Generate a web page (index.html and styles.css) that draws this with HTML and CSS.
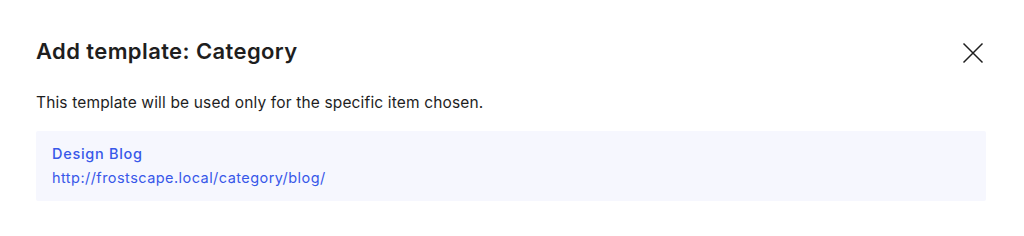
FILE: index.html
```html
<!DOCTYPE html>
<html>
<head>
<meta charset="utf-8">
<link rel="stylesheet" href="styles.css">
</head>
<body>
<div class="modal">
  <div class="header">
    <h1 class="title">Add template: Category</h1>
    <button class="close" aria-label="Close">
      <svg width="24" height="24" viewBox="0 0 24 24"><path d="M2.5 2.5L21.5 21.5M21.5 2.5L2.5 21.5" stroke="#1e1e1e" stroke-width="1.5" fill="none"/></svg>
    </button>
  </div>
  <p class="desc">This template will be used only for the specific item chosen.</p>
  <div class="item">
    <div class="item-title">Design Blog</div>
    <div class="item-url">http://frostscape.local/category/blog/</div>
  </div>
</div>
</body>
</html>
```
FILE: styles.css
```css
html, body {
  margin: 0;
  padding: 0;
  background: #fff;
}
body {
  font-family: Inter, "Noto Sans", sans-serif;
  color: #1e1e1e;
}
.modal {
  width: 1024px;
  height: 236px;
  box-sizing: border-box;
  padding: 35px 38px 0 36px;
}
.header {
  display: flex;
  align-items: center;
  justify-content: space-between;
  height: 32px;
}
.title {
  margin: 0;
  font-size: 22px;
  font-weight: 600;
  line-height: 32px;
  letter-spacing: 0.4px;
}
.close {
  border: 0;
  background: none;
  padding: 0;
  width: 24px;
  height: 24px;
  margin: 3px 1px 0 0;
  cursor: pointer;
}
.close svg {
  display: block;
}
.desc {
  margin: 26px 0 0 0;
  font-size: 15.5px;
  line-height: 20px;
  letter-spacing: 0.15px;
}
.item {
  margin-top: 18px;
  background: #f6f7fe;
  border-radius: 2px;
  padding: 13px 16px 0;
  height: 70px;
  box-sizing: border-box;
  width: 950px;
  display: flex;
  flex-direction: column;
  gap: 4px;
}
.item-title {
  font-size: 14.5px;
  font-weight: 500;
  color: #3858e9;
  line-height: 20px;
  letter-spacing: 0.7px;
}
.item-url {
  font-size: 14.5px;
  color: #3858e9;
  line-height: 20px;
  letter-spacing: 0.45px;
}
```
